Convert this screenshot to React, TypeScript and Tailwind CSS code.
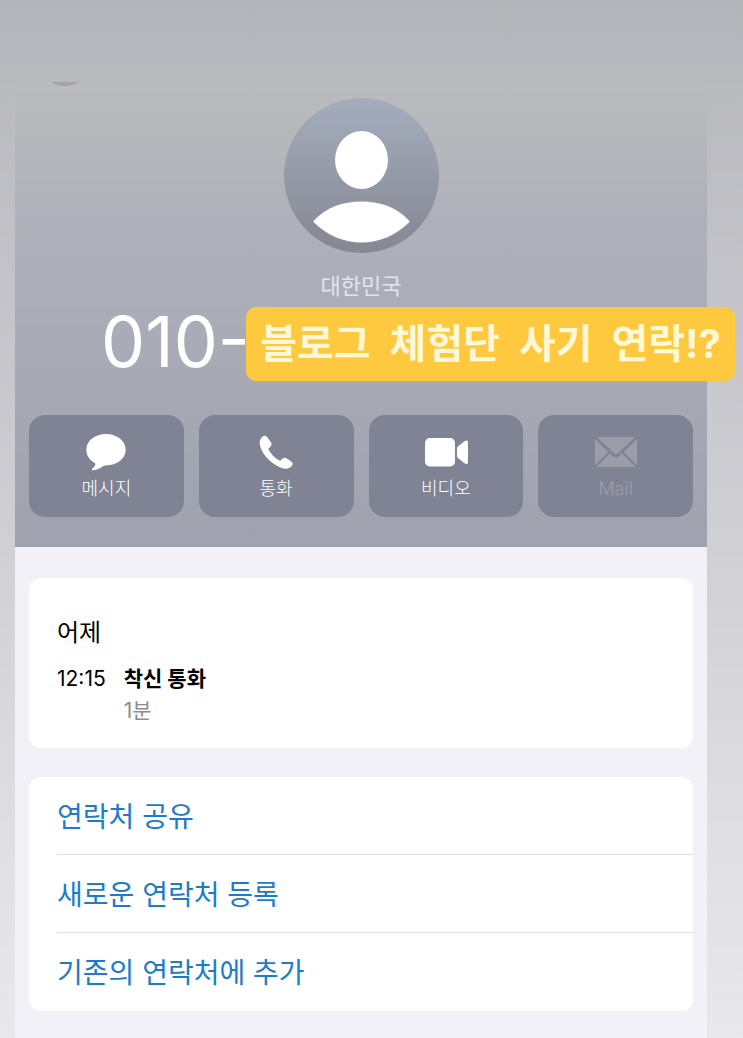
import type { ReactNode } from 'react';

function AvatarIcon() {
  return (
    <svg viewBox="0 0 155 155" className="size-[155px]" aria-hidden="true">
      <defs>
        <linearGradient id="avatar" x1="0" y1="0" x2="0" y2="1">
          <stop offset="0" stopColor="#a5adbd" />
          <stop offset="1" stopColor="#858792" />
        </linearGradient>
      </defs>
      <circle cx="77.5" cy="77.5" r="77.5" fill="url(#avatar)" />
      <ellipse cx="77.5" cy="62" rx="26.5" ry="29" fill="#fff" />
      <path
        d="M30 124.500C29.300 123.700 29.300 123.200 30 122.400C42 109.500 58.500 103.500 77.500 103.500S113 109.500 125 122.400C125.700 123.200 125.700 123.700 125 124.500C112 137.500 95 144.500 77.500 144.500S43 137.500 30 124.500Z"
        fill="#fff"
      />
    </svg>
  );
}

function MessageIcon() {
  return (
    <svg viewBox="0 0 44 38" className="h-[38px] w-11" fill="currentColor" aria-hidden="true">
      <path d="M22 1C11 1 2.300 7.800 2.300 16.800C2.300 22.300 5.400 27.200 10.700 30C11.600 30.500 11.600 31.300 11.100 32.300C10.500 33.600 9.300 34.800 8.300 35.700C7.600 36.500 8 37.300 9.200 37.200C13 36.900 16.500 35 19.500 33C20.200 32.500 20.900 32.400 22 32.400C33 32.400 41.700 25.700 41.700 16.800S33 1 22 1Z" />
    </svg>
  );
}

function PhoneIcon() {
  return (
    <svg viewBox="0 0 44 38" className="h-[38px] w-11" fill="currentColor" aria-hidden="true">
      <path d="M8.200 3.900C9.900 2.300 12.200 2.500 13.500 4.400L16.900 9.300C18 11 17.800 12.500 16.200 13.900L15.200 14.800C14.400 15.500 14.400 16.200 14.900 17.100C16 19.200 17.600 21.200 19.300 22.900C21.100 24.700 23.200 26.300 25.100 27.300C26 27.800 26.600 27.700 27.300 26.900L28.100 26C29.400 24.600 31.200 24.300 32.900 25.400L37 28.300C38.900 29.700 39.200 31.300 37.700 33C35.600 35.400 32.800 36.200 29.600 35.500C24.700 34.400 19.300 31.200 14.500 26.500C9.800 21.800 6.700 16.700 5.900 12C5.300 8.600 6 5.800 8.200 3.900Z" />
    </svg>
  );
}

function VideoIcon() {
  return (
    <svg viewBox="0 0 44 38" className="h-[38px] w-11" fill="currentColor" aria-hidden="true">
      <rect x="1" y="5" width="30" height="28.500" rx="5" />
      <path d="M33 15.600C33 14.600 33.400 13.900 34.200 13.200L40.500 8.200C42.300 6.900 44 7.400 44 9.300V29.200C44 31.100 42.300 31.600 40.500 30.300L34.200 25.200C33.400 24.600 33 23.900 33 22.900Z" />
    </svg>
  );
}

function MailIcon() {
  return (
    <svg viewBox="0 0 44 38" className="h-[38px] w-11" fill="currentColor" aria-hidden="true">
      <path d="M3 4H41L24.800 19.600C23 21.300 21 21.300 19.200 19.600Z" />
      <path d="M1 6L14.300 19L1 32.300Z" />
      <path d="M43 6L29.700 19L43 32.300Z" />
      <path d="M15.800 20.500L18.300 22.700C20.700 24.800 23.300 24.800 25.700 22.700L28.200 20.500L41.500 34H2.500Z" />
    </svg>
  );
}

interface ActionButtonProps {
  icon: ReactNode;
  label: string;
  disabled?: boolean;
}

function ActionButton({ icon, label, disabled }: ActionButtonProps) {
  return (
    <button
      type="button"
      disabled={disabled}
      className="flex h-[102px] flex-1 flex-col items-center rounded-2xl bg-[#808393] pt-[18px] text-lg leading-7 font-light text-white disabled:text-[#9b9dab]"
    >
      {icon}
      <span className="mt-1">{label}</span>
    </button>
  );
}

const contactActions = ['연락처 공유', '새로운 연락처 등록', '기존의 연락처에 추가'];

export default function App() {
  return (
    <div className="min-h-screen bg-linear-[180deg,#b4b5ba_0%,#babbbf_9%,#c3c3c9_28%,#d0cfd4_52%,#dfdfe3_80%,#e9e9ec_100%] pr-9 pl-[15px] font-['Inter','Noto_Sans_CJK_KR',sans-serif]">
      <div className="h-[82px]" />

      <main className="flex min-h-[calc(100vh-82px)] flex-col bg-[#f2f1f7]">
        <header className="relative flex flex-col bg-linear-[180deg,#babbbf_0%,#b6b7bb_14%,#aeb1ba_30%,#a8aab5_60%,#9fa1ae_100%] px-3.5 pt-4 pb-[30px]">
          <svg viewBox="0 0 28 5" className="absolute top-0 left-9 h-[5px] w-7" aria-hidden="true">
            <path d="M0 0H28C20 5.500 8 5.500 0 0Z" fill="#a4a4a8" />
          </svg>

          <div className="flex flex-col items-center">
            <AvatarIcon />
            <p className="mt-[18px] text-[22px] leading-[30px] text-[#e4e5ea]">대한민국</p>
          </div>

          <div className="relative mt-1.5 h-[74px]">
            <h1 className="pl-[72px] text-[70px] leading-[70px] text-white">010-</h1>
            <p className="absolute top-0 -right-[42px] rounded-[10px] bg-[#ffc93f] px-3.5 text-[40px] leading-[74px] font-bold whitespace-pre text-[#fff8d6]">
              블로그{'  '}체험단{'  '}사기{'  '}연락!?
            </p>
          </div>

          <div className="mt-[34px] flex gap-[15px]">
            <ActionButton icon={<MessageIcon />} label="메시지" />
            <ActionButton icon={<PhoneIcon />} label="통화" />
            <ActionButton icon={<VideoIcon />} label="비디오" />
            <ActionButton icon={<MailIcon />} label="Mail" disabled />
          </div>
        </header>

        <div className="flex flex-col gap-[29px] px-3.5 pt-[31px] pb-7">
          <section className="rounded-xl bg-white px-7 pt-[37px] pb-[21px] text-black">
            <h2 className="text-2xl leading-9">어제</h2>
            <div className="mt-3 flex gap-[18px] text-[21px] leading-8">
              <time>12:15</time>
              <div>
                <p className="font-bold">착신 통화</p>
                <p className="text-[#8b8b90]">1분</p>
              </div>
            </div>
          </section>

          <ul className="rounded-xl bg-white pl-7">
            {contactActions.map((action) => (
              <li key={action} className="h-[78px] border-b border-[#e0e0e3] last:border-b-0">
                <button type="button" className="h-full w-full pt-0.5 text-left text-[28px] leading-10 text-[#1c7cc9]">
                  {action}
                </button>
              </li>
            ))}
          </ul>
        </div>
      </main>
    </div>
  );
}
